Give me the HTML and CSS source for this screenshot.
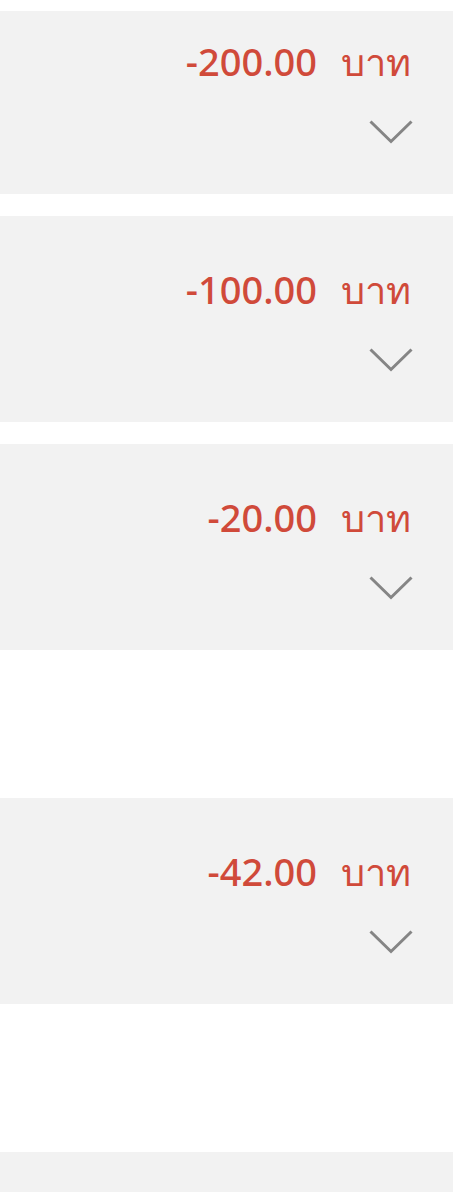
FILE: index.html
```html
<!DOCTYPE html>
<html lang="th">
<head>
<meta charset="utf-8">
<link rel="stylesheet" href="styles.css">
</head>
<body>
<div class="list">
  <div class="card card-first">
    <div class="amount"><span class="num">-200.00</span><span class="unit">บาท</span></div>
    <div class="toggle"><svg width="44" height="24" viewBox="0 0 44 24"><polyline points="1.5,1.5 22,21.5 42.5,1.5" fill="none" stroke="#858585" stroke-width="3"/></svg></div>
  </div>
  <div class="card gap-s">
    <div class="amount"><span class="num">-100.00</span><span class="unit">บาท</span></div>
    <div class="toggle"><svg width="44" height="24" viewBox="0 0 44 24"><polyline points="1.5,1.5 22,21.5 42.5,1.5" fill="none" stroke="#858585" stroke-width="3"/></svg></div>
  </div>
  <div class="card gap-s">
    <div class="amount"><span class="num">-20.00</span><span class="unit">บาท</span></div>
    <div class="toggle"><svg width="44" height="24" viewBox="0 0 44 24"><polyline points="1.5,1.5 22,21.5 42.5,1.5" fill="none" stroke="#858585" stroke-width="3"/></svg></div>
  </div>
  <div class="card gap-l">
    <div class="amount"><span class="num">-42.00</span><span class="unit">บาท</span></div>
    <div class="toggle"><svg width="44" height="24" viewBox="0 0 44 24"><polyline points="1.5,1.5 22,21.5 42.5,1.5" fill="none" stroke="#858585" stroke-width="3"/></svg></div>
  </div>
  <div class="card gap-l"></div>
</div>
</body>
</html>
```
FILE: styles.css
```css
html, body {
  margin: 0;
  padding: 0;
  background: #ffffff;
}
body {
  font-family: "Noto Sans", "Open Sans", sans-serif;
}
.list {
  display: flex;
  flex-direction: column;
  padding-top: 11px;
}
.card {
  background: #f2f2f2;
  padding: 48px 42px 50px 0;
  display: flex;
  flex-direction: column;
  align-items: flex-end;
  min-height: 40px;
}
.card-first {
  padding-top: 25px;
}
.gap-s {
  margin-top: 22px;
}
.gap-l {
  margin-top: 148px;
}
.amount {
  color: #d04a3a;
  font-size: 38px;
  font-weight: 500;
  line-height: 50px;
  display: flex;
  align-items: baseline;
}
.unit {
  margin-left: 24px;
}
.toggle {
  margin-top: 34px;
  margin-right: -2px;
  height: 24px;
  display: flex;
}
```
